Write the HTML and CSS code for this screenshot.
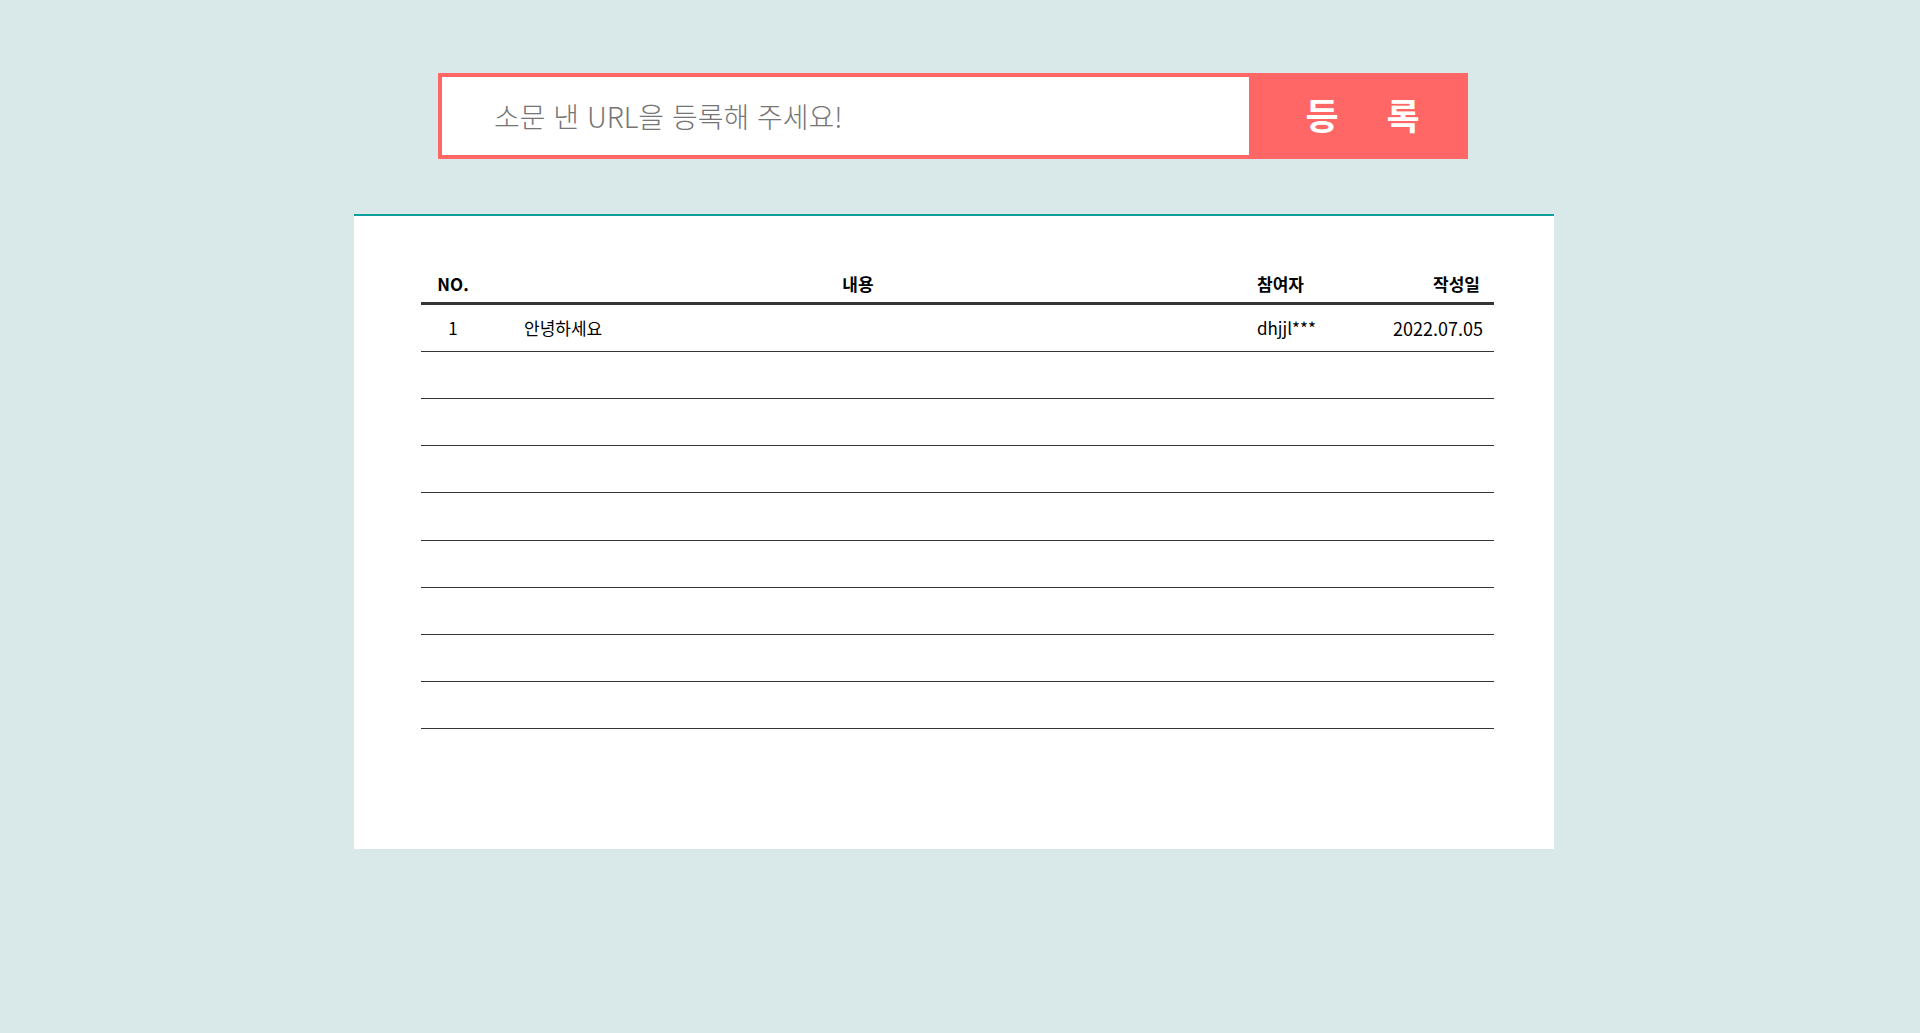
FILE: index.html
```html
<!DOCTYPE html>
<html lang="ko">
<head>
<meta charset="utf-8">
<meta name="viewport" content="width=device-width, initial-scale=1">
<title>소문내기 이벤트</title>
<link rel="stylesheet" href="styles.css">
</head>
<body>
<main class="event">
  <form class="url-form">
    <input class="url-input" type="text" aria-label="소문 낸 URL" placeholder="소문 낸 URL을 등록해 주세요!">
    <button class="url-submit" type="button"><span>등</span><span>록</span></button>
  </form>
  <section class="board">
    <table class="entries">
      <colgroup><col class="w-no"><col><col class="w-user"><col class="w-date"></colgroup>
      <thead>
        <tr><th class="no">NO.</th><th class="title">내용</th><th class="user">참여자</th><th class="date">작성일</th></tr>
      </thead>
      <tbody>
        <tr><td class="no">1</td><td class="title">안녕하세요</td><td class="user">dhjjl***</td><td class="date">2022.07.05</td></tr>
        <tr><td colspan="4"></td></tr>
        <tr><td colspan="4"></td></tr>
        <tr><td colspan="4"></td></tr>
        <tr><td colspan="4"></td></tr>
        <tr><td colspan="4"></td></tr>
        <tr><td colspan="4"></td></tr>
        <tr><td colspan="4"></td></tr>
        <tr><td colspan="4"></td></tr>
      </tbody>
    </table>
  </section>
</main>
</body>
</html>
```

FILE: styles.css
```css
* { box-sizing: border-box; }

body {
  margin: 0;
  background: #d9e9e9;
  color: #000;
  font-family: "Noto Sans CJK KR", "Noto Sans", sans-serif;
  font-size: 17px;
  line-height: 24px;
}

.event {
  max-width: 1212px;
  margin: 0 auto;
  padding: 73px 12px 48px 0;
}

.url-form {
  display: flex;
  margin: 0 86px 55px 84px;
  border: 4px solid #ff6666;
  background: #ff6666;
}

.url-input {
  flex: 1;
  min-width: 0;
  height: 78px;
  padding: 0 52px;
  border: 0;
  border-radius: 0;
  background: #fff;
  font: 300 28px/40px "Noto Sans CJK KR", "Noto Sans", sans-serif;
}

.url-input::placeholder { color: #757575; }

.url-submit {
  display: flex;
  align-items: center;
  justify-content: center;
  gap: 48px;
  width: 215px;
  padding: 0 0 4px 12px;
  border: 0;
  background: #ff6666;
  color: #fff;
  font: 700 36px/56px "Noto Sans CJK KR", "Noto Sans", sans-serif;
  cursor: pointer;
}

.board {
  padding: 52px 60px 120px 67px;
  border-top: 2px solid #0f9f9b;
  background: #fff;
}

.entries {
  width: 100%;
  height: 461px;
  border-collapse: separate;
  border-spacing: 0;
  table-layout: fixed;
}

.w-no { width: 64px; }
.w-user { width: 124px; }
.w-date { width: 113px; }

.entries th {
  height: 37px;
  padding: 0 0 2px;
  border-bottom: 3px solid #373435;
  font-weight: 700;
}

.entries td {
  height: 47px;
  padding: 0;
  border-bottom: 1px solid #373435;
}

.entries .no { text-align: center; }
.entries th.title { padding-right: 26px; }
.entries td.title { padding-left: 39px; text-align: left; }
.entries .user { text-align: left; }
.entries .date { text-align: right; }
.entries th.date { padding-right: 14px; }
.entries td.date { padding-right: 11px; font-size: 18px; }
```
